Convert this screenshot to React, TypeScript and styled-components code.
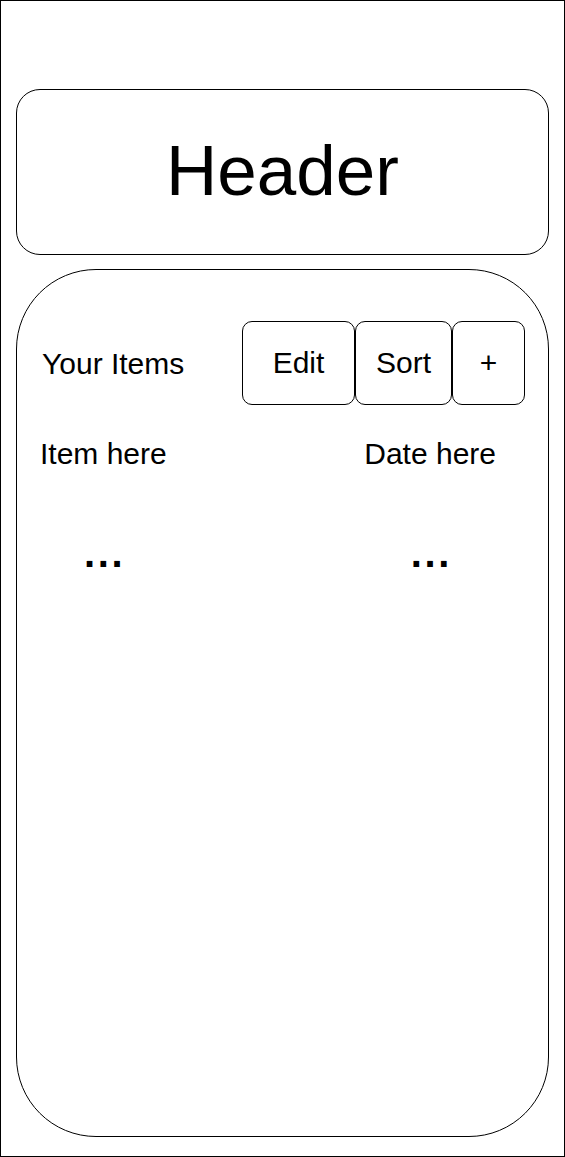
import React from "react";
import styled, { createGlobalStyle } from "styled-components";

const Global = createGlobalStyle`
  html, body { margin: 0; padding: 0; background: #ffffff; }
  body { font-family: "Liberation Sans", Arial, Helvetica, sans-serif; color: #000; }
  * { box-sizing: border-box; }
`;

const Frame = styled.div`
  width: 565px;
  height: 1157px;
  border: 1px solid #000;
  padding: 88px 15px 19px 15px;
  display: flex;
  flex-direction: column;
  gap: 14px;
  background: #fff;
`;

const HeaderBox = styled.header`
  height: 166px;
  border: 1px solid #000;
  border-radius: 24px;
  display: flex;
  align-items: center;
  justify-content: center;
  padding-bottom: 4px;
`;

const HeaderTitle = styled.h1`
  margin: 0;
  font-size: 71px;
  font-weight: 400;
  line-height: 1;
`;

const Panel = styled.main`
  flex: 1;
  border: 1px solid #000;
  border-radius: 80px;
  padding: 51px 23px 0 25px;
  display: flex;
  flex-direction: column;
`;

const Toolbar = styled.div`
  display: flex;
  align-items: center;
  justify-content: space-between;
`;

const Title = styled.span`
  font-size: 30px;
  line-height: 33px;
`;

const ButtonGroup = styled.div`
  display: flex;
`;

const Button = styled.button<{ $w: number }>`
  width: ${(p) => p.$w}px;
  height: 84px;
  border: 1px solid #000;
  border-radius: 10px;
  background: #fff;
  font-family: inherit;
  font-size: 30px;
  color: #000;
  padding: 0;
  display: flex;
  align-items: center;
  justify-content: center;
`;

const ListRow = styled.div`
  display: flex;
  justify-content: space-between;
  margin-top: 32px;
  margin-left: -2px;
  padding-right: 29px;
`;

const Column = styled.div`
  display: flex;
  flex-direction: column;
  align-items: center;
`;

const ColumnLabel = styled.span`
  font-size: 30px;
  line-height: 33px;
`;

const More = styled.span`
  margin-top: 60px;
  font-size: 40px;
  font-weight: 700;
  line-height: 46px;
  letter-spacing: 2.7px;
  padding-left: 2.7px;
`;

export default function App() {
  return (
    <>
      <Global />
      <Frame>
        <HeaderBox>
          <HeaderTitle>Header</HeaderTitle>
        </HeaderBox>
        <Panel>
          <Toolbar>
            <Title>Your Items</Title>
            <ButtonGroup>
              <Button $w={113}>Edit</Button>
              <Button $w={97}>Sort</Button>
              <Button $w={73}>+</Button>
            </ButtonGroup>
          </Toolbar>
          <ListRow>
            <Column>
              <ColumnLabel>Item here</ColumnLabel>
              <More>...</More>
            </Column>
            <Column>
              <ColumnLabel>Date here</ColumnLabel>
              <More>...</More>
            </Column>
          </ListRow>
        </Panel>
      </Frame>
    </>
  );
}
